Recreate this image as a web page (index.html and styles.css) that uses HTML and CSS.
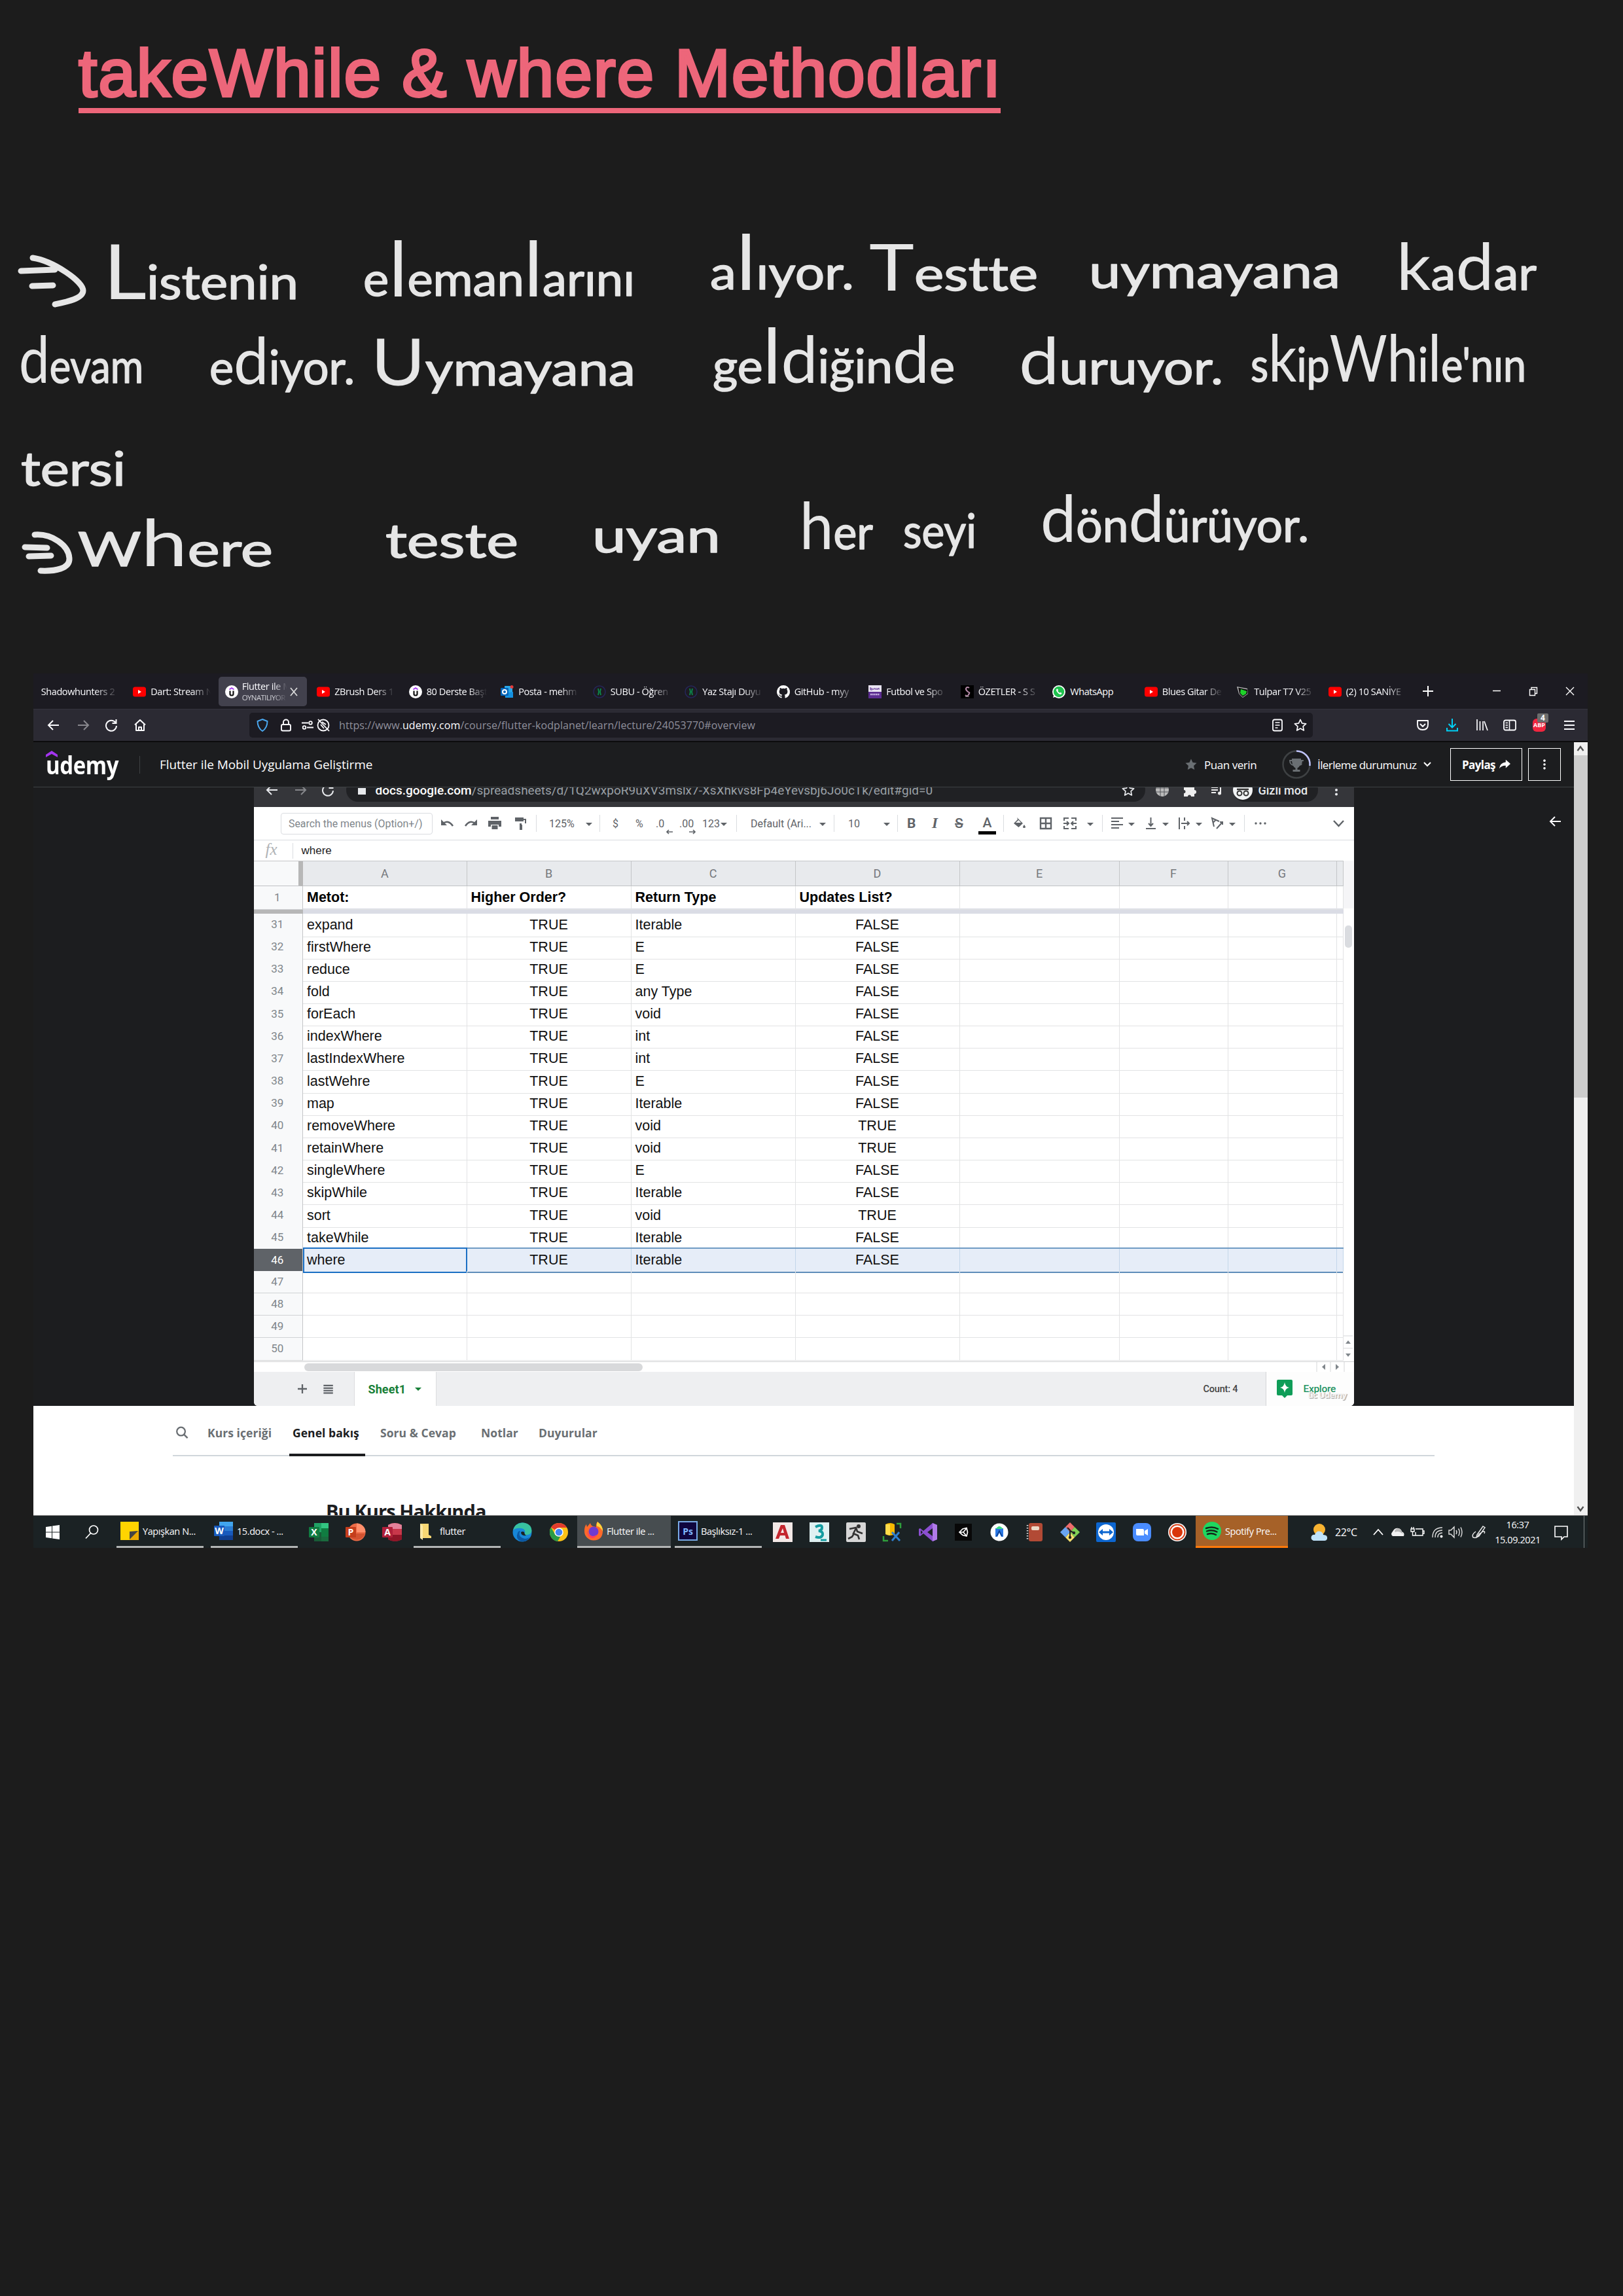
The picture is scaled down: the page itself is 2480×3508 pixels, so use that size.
FILE: index.html
```html
<!DOCTYPE html>
<html lang="tr">
<head>
<meta charset="utf-8">
<title>takeWhile &amp; where Methodları</title>
<link rel="stylesheet" href="styles.css">
</head>
<body>
<svg class="sprite" aria-hidden="true">
  <symbol id="yt" viewBox="0 0 20 20"><rect x="0" y="2.5" width="20" height="15" rx="3.5" fill="#f00"/><path d="M8 7l5 3-5 3z" fill="#fff"/></symbol>
  <symbol id="ud" viewBox="0 0 20 20"><circle cx="10" cy="10" r="10" fill="#fff"/><path d="M6.5 6.5L10 4l3.500 2.500" fill="none" stroke="#a435f0" stroke-width="1.800"/><path d="M7.500 8.500v5q0 2 2.500 2t2.500-2v-5" fill="none" stroke="#111" stroke-width="2.200"/></symbol>
  <symbol id="subu" viewBox="0 0 20 20"><circle cx="10" cy="10" r="9" fill="none" stroke="#26265a" stroke-width="1.500"/><path d="M8 5l1 5-1 5M12 5l-1 5 1 5" fill="none" stroke="#0b8a4c" stroke-width="1.800"/></symbol>
  <symbol id="car" viewBox="0 0 12 20"><path d="M1 9h10l-5 5z" fill="#5f6368"/></symbol>
  <symbol id="back" viewBox="0 0 20 20"><path d="M18 10H2M9 3l-7 7 7 7" fill="none" stroke="currentColor" stroke-width="2"/></symbol>
  <symbol id="reload" viewBox="0 0 20 20"><path d="M16.500 6A8 8 0 1 0 18 11M17.500 1v6h-6" fill="none" stroke="currentColor" stroke-width="2"/></symbol>
  <symbol id="star" viewBox="0 0 20 20"><path d="M10 1.500l2.600 5.600 6 .7-4.500 4.100 1.200 6.100L10 15l-5.300 3 1.200-6.100L1.400 7.800l6-.7z" fill="none" stroke="currentColor" stroke-width="1.700" stroke-linejoin="round"/></symbol>
  <symbol id="dots" viewBox="0 0 20 20"><g fill="currentColor"><circle cx="10" cy="3.500" r="2"/><circle cx="10" cy="10" r="2"/><circle cx="10" cy="16.500" r="2"/></g></symbol>
</svg>
<main class="page">
  <h1 class="title">takeWhile &amp; where Methodları</h1>

  <svg class="ink" viewBox="0 0 2480 560" role="img" aria-label="Notlar">
    <g class="arrow">
      <path d="M32 84L84 82M49 107l32-1M50 64c32 5 77 36 77 50 0 12-24 17-43 21"/>
      <path d="M38 506l34 1M44 520l34-1M53 487c26-2 52 16 53 36 1 16-22 20-44 19"/>
    </g>
    <g class="words">
      <text x="158" y="127" textLength="298" lengthAdjust="spacingAndGlyphs"><tspan class="tall">L</tspan>istenin</text>
      <text x="555" y="122" textLength="415" lengthAdjust="spacingAndGlyphs">e<tspan class="tall">l</tspan>eman<tspan class="tall">l</tspan>arını</text>
      <text x="1085" y="112" textLength="220" lengthAdjust="spacingAndGlyphs">a<tspan class="tall">l</tspan>ıyor.</text>
      <text x="1328" y="114" textLength="258" lengthAdjust="spacingAndGlyphs"><tspan class="big">T</tspan>estte</text>
      <text x="1664" y="110" textLength="384" lengthAdjust="spacingAndGlyphs">uymayana</text>
      <text x="2134" y="113" textLength="214" lengthAdjust="spacingAndGlyphs"><tspan class="big">k</tspan>a<tspan class="big">d</tspan>ar</text>
      <text x="29" y="255" textLength="190" lengthAdjust="spacingAndGlyphs"><tspan class="big">d</tspan>evam</text>
      <text x="320" y="257" textLength="222" lengthAdjust="spacingAndGlyphs">e<tspan class="big">d</tspan>iyor.</text>
      <text x="567" y="259" textLength="404" lengthAdjust="spacingAndGlyphs"><tspan class="big">U</tspan>ymayana</text>
      <text x="1089" y="255" textLength="370" lengthAdjust="spacingAndGlyphs">ge<tspan class="tall">l</tspan><tspan class="big">d</tspan>iğin<tspan class="big">d</tspan>e</text>
      <text x="1557" y="257" textLength="312" lengthAdjust="spacingAndGlyphs"><tspan class="big">d</tspan>uruyor.</text>
      <text x="1911" y="253" textLength="421" lengthAdjust="spacingAndGlyphs">s<tspan class="big">k</tspan>ip<tspan class="big">Wh</tspan>i<tspan class="big">l</tspan>e'nın</text>
      <text x="32" y="412" textLength="160" lengthAdjust="spacingAndGlyphs">tersi</text>
      <text x="119" y="535" textLength="298" lengthAdjust="spacingAndGlyphs">W<tspan class="big">h</tspan>ere</text>
      <text x="589" y="522" textLength="203" lengthAdjust="spacingAndGlyphs">teste</text>
      <text x="905" y="514" textLength="196" lengthAdjust="spacingAndGlyphs">uyan</text>
      <text x="1222" y="509" textLength="112" lengthAdjust="spacingAndGlyphs"><tspan class="big">h</tspan>er</text>
      <text x="1380" y="507" textLength="112" lengthAdjust="spacingAndGlyphs">seyi</text>
      <text x="1590" y="498" textLength="410" lengthAdjust="spacingAndGlyphs"><tspan class="big">d</tspan>ön<tspan class="big">d</tspan>ürüyor.</text>
    </g>
  </svg>

  <section class="screen">
    <div class="tabs">
      <div class="tab"><span>Shadowhunters 2</span></div>
      <div class="tab"><svg><use href="#yt"/></svg><span>Dart: Stream N</span></div>
      <div class="tab active"><svg><use href="#ud"/></svg><span class="two">Flutter ile M<small>OYNATILIYOR</small></span><svg class="x" viewBox="0 0 20 20"><path d="M5 4l10 12M15 4L5 16" stroke="#ddd" stroke-width="1.700"/></svg></div>
      <div class="tab"><svg><use href="#yt"/></svg><span>ZBrush Ders 1</span></div>
      <div class="tab"><svg><use href="#ud"/></svg><span>80 Derste Başt</span></div>
      <div class="tab"><svg viewBox="0 0 20 20"><path d="M6 1h12v9l1 9H7z" fill="#28a8ea"/><path d="M7 12l12-2v9H7z" fill="#1490df"/><rect y="4" width="12" height="12" rx="1" fill="#0364b8"/><circle cx="6" cy="10" r="3" fill="none" stroke="#fff" stroke-width="2"/><circle cx="17" cy="2.500" r="2.500" fill="#e33b3b"/></svg><span>Posta - mehm</span></div>
      <div class="tab"><svg><use href="#subu"/></svg><span>SUBU - Öğren</span></div>
      <div class="tab"><svg><use href="#subu"/></svg><span>Yaz Stajı Duyu</span></div>
      <div class="tab"><svg viewBox="0 0 16 16"><path fill="#fff" d="M8 0a8 8 0 0 0-2.530 15.590c.4.070.55-.17.55-.38v-1.490c-2.010.37-2.530-.49-2.690-.94-.09-.23-.48-.94-.82-1.130-.28-.15-.68-.52-.01-.53.63-.01 1.080.58 1.230.82.72 1.210 1.870.87 2.330.66.07-.52.28-.87.51-1.070-1.780-.2-3.640-.89-3.640-3.950 0-.87.31-1.590.82-2.150-.08-.2-.36-1.020.08-2.120 0 0 .67-.21 2.200.82a7.600 7.600 0 0 1 4 0c1.530-1.040 2.200-.82 2.200-.82.44 1.100.16 1.920.08 2.120.51.56.82 1.270.82 2.150 0 3.070-1.870 3.750-3.650 3.950.29.25.54.73.54 1.480v2.200c0 .21.15.46.55.38A8 8 0 0 0 8 0z"/></svg><span>GitHub - myy</span></div>
      <div class="tab"><svg viewBox="0 0 20 20"><rect width="20" height="20" fill="#5c2d91"/><rect width="20" height="10" fill="#e9e4f2"/><path d="M3 3v4h3V5H3M8 7V5h3v2M13 4v3l3-3v3" fill="none" stroke="#5c2d91"/><path d="M3 14h14" stroke="#cbb6e4" stroke-width="2.500" stroke-dasharray="2 .7"/></svg><span>Futbol ve Spo</span></div>
      <div class="tab"><svg viewBox="0 0 20 20"><rect width="20" height="20" fill="#000"/><path d="M13 4Q10 2 8.500 4t1 4.500 3.500 2.500-1 3.500-5 .5" fill="none" stroke="#b58aa8" stroke-width="2"/><path d="M7 17.500h6" stroke="#777"/></svg><span>ÖZETLER - S S</span></div>
      <div class="tab"><svg viewBox="0 0 20 20"><circle cx="10" cy="10" r="10" fill="#fff"/><path d="M1 19l1.500-5 4 3z" fill="#fff"/><circle cx="10" cy="10" r="8.200" fill="#1fc24e"/><path d="M7 5.500Q5 7 7 10t5 4q2 .5 2.500-2l-2-1.200-1.200 1Q9 10.500 8.200 8.500l1-1L8 5.500z" fill="#fff"/></svg><span class="full">WhatsApp</span></div>
      <div class="tab"><svg><use href="#yt"/></svg><span>Blues Gitar De</span></div>
      <div class="tab"><svg viewBox="0 0 20 20"><path d="M1 2l16 3 1 8-8 6-6-6z" fill="#bbb"/><path d="M3 3.500l14 3 .5 6L10 18l-5-5z" fill="#111"/><path d="M7 6l9 3-1 4-5 3-4-4z" fill="#1fd22a"/></svg><span>Tulpar T7 V25</span></div>
      <div class="tab"><svg><use href="#yt"/></svg><span>(2) 10 SANİYE</span></div>
      <div class="win">
        <svg viewBox="0 0 20 20"><path d="M10 2v16M2 10h16" stroke="#fff" stroke-width="2"/></svg>
        <svg viewBox="0 0 20 20"><path d="M4 9.500h12" stroke="#fff" stroke-width="1.500"/></svg>
        <svg viewBox="0 0 20 20"><path d="M4.500 7.500h8v9h-8zM7 7V4.500h8.500v9H13" fill="none" stroke="#fff" stroke-width="1.400"/></svg>
        <svg viewBox="0 0 20 20"><path d="M4 4l12 12M16 4L4 16" stroke="#fff" stroke-width="1.400"/></svg>
      </div>
    </div>

    <div class="nav">
      <svg><use href="#back"/></svg>
      <svg class="dim flip"><use href="#back"/></svg>
      <svg><use href="#reload"/></svg>
      <svg viewBox="0 0 20 20"><path d="M2 9.500L10 2l8 7.500M4 8.500V18h12V8.500M8 18v-5h4v5" fill="none" stroke="currentColor" stroke-width="2" stroke-linejoin="round"/></svg>
      <div class="url">
        <svg viewBox="0 0 20 20"><path d="M10 1l7.500 3q0 10-7.500 15Q2.500 14 2.500 4z" fill="none" stroke="#4aa8f0" stroke-width="1.900"/></svg>
        <svg viewBox="0 0 20 20"><rect x="3" y="9" width="14" height="9.500" rx="2" fill="none" stroke="currentColor" stroke-width="1.900"/><path d="M6 9V5.500a4 4 0 0 1 8 0V9" fill="none" stroke="currentColor" stroke-width="1.900"/></svg>
        <svg viewBox="0 0 20 20"><g fill="none" stroke="currentColor" stroke-width="1.800"><path d="M1 6.500h10M9 13.500h10"/><circle cx="14.500" cy="6.500" r="2.300"/><circle cx="5" cy="13.500" r="2.300"/></g></svg>
        <svg viewBox="0 0 20 20"><g fill="none" stroke="currentColor" stroke-width="1.800"><circle cx="10" cy="10" r="8.500"/><path d="M2 1l17 18M8 5l6 4M6 9l5 6"/></g></svg>
        <p>https://www.<b>udemy.com</b>/course/flutter-kodplanet/learn/lecture/24053770#overview</p>
        <svg viewBox="0 0 20 20"><rect x="3" y="1.500" width="14" height="17" rx="2.500" fill="none" stroke="currentColor" stroke-width="1.800"/><path d="M6.500 6h7M6.500 10h7M6.500 14h4" stroke="currentColor" stroke-width="1.700"/></svg>
        <svg><use href="#star"/></svg>
      </div>
      <svg viewBox="0 0 20 20"><path d="M2 3h16v6q0 8-8 8T2 9zM6 8l4 4 4-4" fill="none" stroke="currentColor" stroke-width="1.900" stroke-linejoin="round"/></svg>
      <svg viewBox="0 0 20 20"><path d="M10 0v13M4.500 8l5.500 5.500L15.500 8M2 14v4.500h16V14" fill="none" stroke="#00d0f5" stroke-width="2"/></svg>
      <svg viewBox="0 0 20 20"><path d="M2 1v17M6.500 4v14M11 4v14M13 4l5 14" stroke="currentColor" stroke-width="1.700"/></svg>
      <svg viewBox="0 0 20 20"><rect x="1" y="2.500" width="18" height="15" rx="2.500" fill="none" stroke="currentColor" stroke-width="1.800"/><path d="M9.500 3v14M3.500 6.500H7M3.500 10H7M3.500 13.500H7" stroke="currentColor" stroke-width="1.600"/></svg>
      <div class="abp">ABP<i>4</i></div>
      <svg viewBox="0 0 20 20"><path d="M2 4h16M2 10h16M2 16h16" stroke="currentColor" stroke-width="2"/></svg>
    </div>

    <div class="site">
      <div class="col">
        <header class="course">
          <div class="logo"><svg viewBox="0 0 18 10"><path d="M0 6l9-6 9 6v4L9 5 0 10z" fill="#a435f0"/></svg><b>udemy</b></div>
          <p class="name">Flutter ile Mobil Uygulama Geliştirme</p>
          <svg class="rate-star" viewBox="0 0 20 20"><path d="M10 .5l2.800 6.200 6.700.8-5 4.600 1.300 6.900L10 15.700 4.200 19l1.300-6.900-5-4.600 6.700-.8z" fill="#6a6f73"/></svg>
          <p class="rate">Puan verin</p>
          <svg class="cup" viewBox="0 0 44 44"><circle cx="22" cy="22" r="20.500" fill="none" stroke="#3e4143" stroke-width="2.500"/><path d="M22 1.500A20.500 20.500 0 0 1 42.500 24" fill="none" stroke="#c0c4fc" stroke-width="2.500"/><path d="M15 13h14v2h4q0 8-6 9-1.500 3-3.500 3.500V30h4v3H16.500v-3h4v-2.500Q18.500 27 17 24q-6-1-6-9h4zM13 17q.5 4 3 5l-1-5zm18 0l-1 5q2.500-1 3-5z" fill="#6a6f73"/></svg>
          <p class="prog">İlerleme durumunuz</p>
          <svg class="chev" viewBox="0 0 14 10"><path d="M2 2l5 5 5-5" fill="none" stroke="#fff" stroke-width="2"/></svg>
          <button class="share">Paylaş<svg viewBox="0 0 20 20"><path d="M12 2l8 7-8 7v-4q-7-.5-11 5 1-10 11-11z" fill="#fff"/></svg></button>
          <button class="more"><svg><use href="#dots"/></svg></button>
        </header>

        <div class="player">
          <div class="video">
            <div class="chrome">
              <div class="chrome-row">
                <svg><use href="#back"/></svg>
                <svg class="flip dim"><use href="#back"/></svg>
                <svg><use href="#reload"/></svg>
                <div class="pill">
                  <svg viewBox="0 0 20 20"><path d="M4 7h12v10H4z" fill="#e8eaed"/></svg>
                  <p><b>docs.google.com</b>/spreadsheets/d/1Q2wxpoR9uXV3mslx7-XsXhkvs8Fp4eYevsbj6Jo0cTk/edit#gid=0</p>
                  <svg><use href="#star"/></svg>
                </div>
                <svg viewBox="0 0 20 20"><circle cx="10" cy="10" r="10" fill="#bbb"/><path d="M0 7h20M0 13h20M7 0v20M13 0v20" stroke="#55565a"/></svg>
                <svg viewBox="0 0 20 20"><path d="M1 5h5a3 3 0 0 1 6 0h5v5a3 3 0 0 1 0 6v4h-5a2.500 2.500 0 0 0-5 0H1v-5a2.500 2.500 0 0 0 0-5z" fill="#eee"/></svg>
                <svg viewBox="0 0 20 20"><path d="M1 6h10M1 10h10M1 14h7" stroke="#eee" stroke-width="2"/><path d="M15 16V5h4" fill="none" stroke="#eee" stroke-width="2"/><circle cx="13.500" cy="15" r="2.500" fill="#eee"/></svg>
                <div class="incog"><svg viewBox="0 0 30 30"><circle cx="15" cy="15" r="15" fill="#f1f3f4"/><path d="M6 14h18" stroke="#333" stroke-width="2.500"/><g fill="none" stroke="#333" stroke-width="2"><circle cx="10" cy="20" r="3.500"/><circle cx="20" cy="20" r="3.500"/></g></svg>Gizli mod</div>
                <svg><use href="#dots"/></svg>
              </div>
            </div>

            <div class="tools">
              <div class="find">Search the menus (Option+/)</div>
              <svg viewBox="0 0 20 20"><path d="M1 4v9h9z" fill="#5f6368"/><path d="M4 10q8-6 15 4" fill="none" stroke="#5f6368" stroke-width="2.500"/></svg>
              <svg class="flip" viewBox="0 0 20 20"><path d="M1 4v9h9z" fill="#5f6368"/><path d="M4 10q8-6 15 4" fill="none" stroke="#5f6368" stroke-width="2.500"/></svg>
              <svg viewBox="0 0 20 20"><path d="M4 0h12v4H4zM0 6h20v9h-4v-3H4v3H0zM5.500 13h9v6h-9z" fill="#5f6368"/></svg>
              <svg viewBox="0 0 20 20"><path d="M2 1h13v2h4v7h-7v2h1v8H9v-10h8V5h-2v2H2z" fill="#5f6368"/></svg>
              <i class="bar"></i><span>125%</span><svg class="car"><use href="#car"/></svg>
              <i class="bar"></i><span>$</span><span>%</span><span class="dec">.0<svg viewBox="0 0 10 6"><path d="M10 3H2M4 0L1 3l3 3" fill="none" stroke="#5f6368" stroke-width="1.700"/></svg></span><span class="dec">.00<svg class="flip" viewBox="0 0 10 6"><path d="M10 3H2M4 0L1 3l3 3" fill="none" stroke="#5f6368" stroke-width="1.700"/></svg></span><span class="num">123<svg class="car"><use href="#car"/></svg></span>
              <i class="bar"></i><span>Default (Ari...</span><svg class="car"><use href="#car"/></svg>
              <i class="bar"></i><span>10</span><svg class="car"><use href="#car"/></svg>
              <i class="bar"></i><b>B</b><em>I</em><s>S</s><span class="tint">A</span>
              <i class="bar"></i>
              <svg viewBox="0 0 20 20"><path d="M6 1l9 9-6.500 6L1 10l6-6zM17 12q4 5 0 5t0-5z" fill="#5f6368"/><path d="M4 9l4.500-4L12 9z" fill="#fff"/></svg>
              <svg viewBox="0 0 20 20"><path d="M2 2h16v16H2zM10 2v16M2 10h16" fill="none" stroke="#5f6368" stroke-width="2.400"/></svg>
              <svg viewBox="0 0 20 20"><path d="M1 6V2h7M12 2h7v4M1 14v4h7M12 18h7v-4M0 10h7M20 10h-7M5 7l3 3-3 3M15 7l-3 3 3 3" fill="none" stroke="#5f6368" stroke-width="2"/></svg>
              <svg class="car"><use href="#car"/></svg>
              <i class="bar"></i>
              <svg viewBox="0 0 20 20"><path d="M0 2h18M0 7h12M0 12h18M0 17h12" stroke="#5f6368" stroke-width="2"/></svg><svg class="car"><use href="#car"/></svg>
              <svg viewBox="0 0 20 20"><path d="M2 18h15M9.500 1v12M6 10l3.500 4 3.500-4" fill="none" stroke="#5f6368" stroke-width="2"/></svg><svg class="car"><use href="#car"/></svg>
              <svg viewBox="0 0 20 20"><path d="M2 1v18M10 1v5M10 14v5M5 10h12M14 7l3 3-3 3" fill="none" stroke="#5f6368" stroke-width="2"/></svg><svg class="car"><use href="#car"/></svg>
              <svg viewBox="0 0 20 20"><path d="M5 15L2 2l11 5M3.500 9L8 4.500M9 18L18 8M14 8h4v4" fill="none" stroke="#5f6368" stroke-width="2"/></svg><svg class="car"><use href="#car"/></svg>
              <i class="bar"></i>
              <svg viewBox="0 0 20 20"><g fill="#5f6368"><circle cx="3" cy="10" r="1.700"/><circle cx="10" cy="10" r="1.700"/><circle cx="17" cy="10" r="1.700"/></g></svg>
              <svg viewBox="0 0 20 20"><path d="M2 6l7.500 8L17 6" fill="none" stroke="#5f6368" stroke-width="2.500"/></svg>
            </div>

            <div class="formula"><em>fx</em><span>where</span></div>

            <div class="sheet">
              <div class="grid">
                <div class="row head"><i></i><i>A</i><i>B</i><i>C</i><i>D</i><i>E</i><i>F</i><i>G</i><i></i></div>
                <div class="row first"><i>1</i><b>Metot:</b><b>Higher Order?</b><b>Return Type</b><b>Updates List?</b><b></b><b></b><b></b><b></b></div>
                <div class="freeze"></div>
                <div class="row"><i>31</i><b>expand</b><b>TRUE</b><b>Iterable</b><b>FALSE</b><b></b><b></b><b></b><b></b></div>
                <div class="row"><i>32</i><b>firstWhere</b><b>TRUE</b><b>E</b><b>FALSE</b><b></b><b></b><b></b><b></b></div>
                <div class="row"><i>33</i><b>reduce</b><b>TRUE</b><b>E</b><b>FALSE</b><b></b><b></b><b></b><b></b></div>
                <div class="row"><i>34</i><b>fold</b><b>TRUE</b><b>any Type</b><b>FALSE</b><b></b><b></b><b></b><b></b></div>
                <div class="row"><i>35</i><b>forEach</b><b>TRUE</b><b>void</b><b>FALSE</b><b></b><b></b><b></b><b></b></div>
                <div class="row"><i>36</i><b>indexWhere</b><b>TRUE</b><b>int</b><b>FALSE</b><b></b><b></b><b></b><b></b></div>
                <div class="row"><i>37</i><b>lastIndexWhere</b><b>TRUE</b><b>int</b><b>FALSE</b><b></b><b></b><b></b><b></b></div>
                <div class="row"><i>38</i><b>lastWehre</b><b>TRUE</b><b>E</b><b>FALSE</b><b></b><b></b><b></b><b></b></div>
                <div class="row"><i>39</i><b>map</b><b>TRUE</b><b>Iterable</b><b>FALSE</b><b></b><b></b><b></b><b></b></div>
                <div class="row"><i>40</i><b>removeWhere</b><b>TRUE</b><b>void</b><b>TRUE</b><b></b><b></b><b></b><b></b></div>
                <div class="row"><i>41</i><b>retainWhere</b><b>TRUE</b><b>void</b><b>TRUE</b><b></b><b></b><b></b><b></b></div>
                <div class="row"><i>42</i><b>singleWhere</b><b>TRUE</b><b>E</b><b>FALSE</b><b></b><b></b><b></b><b></b></div>
                <div class="row"><i>43</i><b>skipWhile</b><b>TRUE</b><b>Iterable</b><b>FALSE</b><b></b><b></b><b></b><b></b></div>
                <div class="row"><i>44</i><b>sort</b><b>TRUE</b><b>void</b><b>TRUE</b><b></b><b></b><b></b><b></b></div>
                <div class="row"><i>45</i><b>takeWhile</b><b>TRUE</b><b>Iterable</b><b>FALSE</b><b></b><b></b><b></b><b></b></div>
                <div class="row sel"><i>46</i><b>where</b><b>TRUE</b><b>Iterable</b><b>FALSE</b><b></b><b></b><b></b><b></b></div>
                <div class="row"><i>47</i><b></b><b></b><b></b><b></b><b></b><b></b><b></b><b></b></div>
                <div class="row"><i>48</i><b></b><b></b><b></b><b></b><b></b><b></b><b></b><b></b></div>
                <div class="row"><i>49</i><b></b><b></b><b></b><b></b><b></b><b></b><b></b><b></b></div>
                <div class="row"><i>50</i><b></b><b></b><b></b><b></b><b></b><b></b><b></b><b></b></div>
              </div>
              <div class="vscroll"><i class="gap"></i><i class="thumb"></i><svg viewBox="0 0 14 40"><path d="M0 1h14M0 20h14" stroke="#d5d6d8"/><path d="M3 13h8l-4-5zM3 28h8l-4 5z" fill="#80868b"/></svg></div>
            </div>
            <div class="hscroll"><i></i><svg viewBox="0 0 44 15"><path d="M1 0v15M22 0v15M43 0v15" stroke="#d5d6d8"/><path d="M14 3v9l-5-4.500zM30 3v9l5-4.500z" fill="#80868b"/></svg></div>
            <footer class="sheetbar">
              <svg viewBox="0 0 20 20"><path d="M10 3v14M3 10h14" stroke="#5f6368" stroke-width="2.300"/></svg>
              <svg viewBox="0 0 20 20"><path d="M1 3.500h17M1 8h17M1 12.500h17M1 17h17" stroke="#5f6368" stroke-width="2.600"/></svg>
              <div class="sheet1">Sheet1<svg viewBox="0 0 12 20"><path d="M1 8h10l-5 5z" fill="#188038"/></svg></div>
              <div class="count">Count: 4</div>
              <div class="explore"><svg viewBox="0 0 24 28"><path d="M2 0h20q2 0 2 2v20q0 2-2 2h-6l-4 4-4-4H2q-2 0-2-2V2q0-2 2-2z" fill="#0f9d58"/><path d="M12 4q1 7 7 8-6 1-7 8-1-7-7-8 6-1 7-8z" fill="#fff"/></svg>Explore<span class="mark">ûc Udemy</span></div>
            </footer>
          </div>
          <svg class="collapse"><use href="#back"/></svg>
        </div>

        <nav class="links">
          <svg viewBox="0 0 20 20"><circle cx="8.500" cy="8.500" r="6.700" fill="none" stroke="#6a6f73" stroke-width="2.400"/><path d="M13.500 13.500l5.500 5.500" stroke="#6a6f73" stroke-width="2.600"/></svg>
          <a class="l1">Kurs içeriği</a><a class="l2 on">Genel bakış</a><a class="l3">Soru &amp; Cevap</a><a class="l4">Notlar</a><a class="l5">Duyurular</a>
        </nav>
        <h2 class="about">Bu Kurs Hakkında</h2>
      </div>
      <div class="scroll"><svg viewBox="0 0 20 20"><path d="M5.500 13L10 7l4.500 6" fill="none" stroke="#505050" stroke-width="2.300"/></svg><i></i><svg viewBox="0 0 20 20"><path d="M5.500 7l4.500 6 4.500-6" fill="none" stroke="#505050" stroke-width="2.300"/></svg></div>
    </div>

    <div class="taskbar">
      <svg viewBox="0 0 30 30"><path d="M0 7l9-1.300V14.500H0zM10 5.500L21 4v10.500H10zM0 15.500h9v8.800L0 23zM10 15.500h11V26l-11-1.500z" fill="#fff"/></svg>
      <svg viewBox="0 0 30 30"><circle cx="13" cy="11.500" r="6.500" fill="none" stroke="#fff" stroke-width="1.700"/><path d="M8.500 16.500L1 24.500" stroke="#fff" stroke-width="1.700"/></svg>
      <div class="task"><svg viewBox="0 0 30 30"><path d="M1 1h28v15L17 29H1z" fill="#ffd400"/><path d="M15 29V17l14-2v14z" fill="#e9a800"/><path d="M15 28V16l13-1z" fill="#444"/></svg>Yapışkan N...</div>
      <div class="task"><svg viewBox="0 0 30 30"><path d="M8 1h21v7H8z" fill="#41a5ee"/><path d="M8 8h21v7H8z" fill="#2b7cd3"/><path d="M8 15h21v7H8z" fill="#185abd"/><path d="M8 22h21v7H8z" fill="#103f91"/><rect y="7" width="16" height="16" rx="1" fill="#185abd"/><text x="8" y="20" text-anchor="middle" class="gl">W</text></svg>15.docx - ...</div>
      <svg viewBox="0 0 30 30"><path d="M8 1h11v14H8z" fill="#21a366"/><path d="M19 1h11v8H19z" fill="#33c481"/><path d="M19 9h11v13H19z" fill="#107c41"/><path d="M8 15h11v14H8z" fill="#185c37"/><path d="M19 22h11v7H19z" fill="#1a6b3e"/><rect y="7" width="16" height="16" rx="1" fill="#107c41"/><text x="8" y="20" text-anchor="middle" class="gl">X</text></svg>
      <svg viewBox="0 0 30 30"><circle cx="17" cy="15" r="13.500" fill="#ed6c47"/><path d="M17 15V1.500A13.500 13.500 0 0 1 30.500 15z" fill="#ff8f6b"/><path d="M4 17a13.500 13.500 0 0 0 26 0z" fill="#d35230"/><rect y="7" width="16" height="16" rx="1" fill="#c43e1c"/><text x="8" y="20" text-anchor="middle" class="gl">P</text></svg>
      <svg viewBox="0 0 30 30"><path d="M9 4q10-6 21 0v22q-10 6-21 0z" fill="#c8374a"/><path d="M9 4q10-6 21 0v6H9z" fill="#e4819a"/><path d="M9 19h21v7q-10 6-21 0z" fill="#8f1527"/><rect y="7" width="16" height="16" rx="1" fill="#b0203a"/><text x="8" y="20" text-anchor="middle" class="gl">A</text></svg>
      <div class="task fl"><svg viewBox="0 0 30 30"><path d="M7 4h13v17l4 2v3H10z" fill="#f7d774"/><path d="M7 4l4 3v22l-4-3z" fill="#ffe9a6"/></svg>flutter</div>
      <svg viewBox="0 0 30 30"><circle cx="15" cy="15" r="14.500" fill="#1787d8"/><path d="M1 12Q4 1 15 .5 29 1 29.500 13q-1 7-11 6 3-9-5-10T1 12z" fill="#38c2a0"/><path d="M12 13q-5 9 7 12 5 0 8-3-6 9-14 7-9-4-5-13 1-3 4-3z" fill="#0c59a4"/><path d="M13 15q3-2 5 0 0 3 3 5-8 1-8-5z" fill="#1b2224"/></svg>
      <svg viewBox="0 0 30 30"><circle cx="15" cy="15" r="14" fill="#fbc116"/><path d="M15 15L3 7.700A14 14 0 0 1 27.200 8H15z" fill="#e33b2e"/><path d="M3 7.700L9 18l8 4-4 7A14 14 0 0 1 3 7.700z" fill="#2a9b48"/><circle cx="15" cy="15" r="6.800" fill="#fff"/><circle cx="15" cy="15" r="5.300" fill="#4285f4"/></svg>
      <div class="task cur"><svg viewBox="0 0 30 30"><path d="M15 29.500A14 14 0 0 1 1 15Q1 8 4 5l1 4 5-6q1 4 4 5l5 1q-1-4 2-8 8 6 8 14 0 14-14 14.500z" fill="#ff6a2a"/><path d="M21 1q9 7 8 15-4-8-9-8-1-4 1-7z" fill="#ffd43a"/><circle cx="15" cy="16" r="7.500" fill="#6f3bd0"/><path d="M5 15q4 12 15 6-3 6-8 5-7-2-7-11z" fill="#ff3f5d"/></svg>Flutter ile ...</div>
      <div class="task ps"><svg viewBox="0 0 30 30"><rect x="1" y="1" width="28" height="28" fill="#10063f" stroke="#78a9e6" stroke-width="2"/><text x="15" y="20.500" text-anchor="middle" class="gl">Ps</text></svg>Başlıksız-1 ...</div>
      <svg viewBox="0 0 30 30"><rect width="30" height="30" fill="#f3e9e7"/><path d="M4 25L12 4h6l7 21h-5l-1.500-5H11l-2 5zM12 16h5l-2-7z" fill="#c4262e"/></svg>
      <svg viewBox="0 0 30 30"><rect width="30" height="30" fill="#dff1f2"/><path d="M9 7q10-5 10 1 0 4-5 5 7 1 6 6-2 6-11 3" fill="none" stroke="#139ca0" stroke-width="4"/><path d="M17 27h9" stroke="#139ca0" stroke-width="3"/></svg>
      <svg viewBox="0 0 30 30"><rect width="30" height="30" rx="2" fill="#d7d7d7"/><circle cx="19" cy="6" r="3" fill="#333"/><path d="M5 10l10-2 2 6 8 3M15 9l-4 8 7 3 2 6M12 17l-3 5-6 3" fill="none" stroke="#333" stroke-width="2.600"/></svg>
      <svg viewBox="0 0 30 30"><path d="M5 3q7-4 14 0v15q-7 4-14 0z" fill="#f5b800"/><path d="M5 3h7v17l-7-2z" fill="#ffdc4a"/><path d="M22 2h6v7M2 21v7h7" fill="none" stroke="#2f9e3c" stroke-width="2.500"/><path d="M15 15l12 13M26 15L15 28" stroke="#2d7fd0" stroke-width="3"/></svg>
      <svg viewBox="0 0 30 30"><path d="M22 1l7 3v22l-7 3L8 17l-5 4-2-1V10l2-1 5 4zM22 9l-8 6 8 6zM4 12v6l3-3z" fill="#8b4fd0" fill-rule="evenodd"/><path d="M22 1l7 3v22l-7 3z" fill="#b07ae8"/></svg>
      <svg viewBox="0 0 30 30"><rect x="1" y="2" width="26" height="26" fill="#080808"/><path d="M8 15l5-5 6-1.500 1.500 6.500L19 21l-6-1.500zM8 15h6M14 15l5-6M14 15l5 6" fill="none" stroke="#fff" stroke-width="1.700"/></svg>
      <svg viewBox="0 0 30 30"><circle cx="15" cy="15" r="13.500" fill="#fff"/><path d="M9 9h12v13h-3l-3-6-3 6H9z" fill="#2b78e4"/><path d="M9.500 10q5.500-8 11 0z" fill="#3ddc84"/><path d="M11 21l4-8 4 8" fill="none" stroke="#0b3c8a" stroke-width="1.500"/></svg>
      <svg viewBox="0 0 30 30"><rect x="6" y="1" width="21" height="28" rx="3" fill="#b24a35"/><rect x="10" y="6" width="12" height="6" rx="2" fill="#ecd9c7"/><path d="M4 4v23" stroke="#ddd" stroke-width="2.500" stroke-dasharray="1.500 2.500"/></svg>
      <svg viewBox="0 0 30 30"><path d="M15 0l7 7-7 8-7-8z" fill="#ee6b6b"/><path d="M8 7l7 8-7 8-8-8z" fill="#6aa5f0"/><path d="M22 7l8 8-8 8-7-8z" fill="#7fcf55"/><path d="M15 15l7 8-7 7-7-7z" fill="#f5dc6b"/><path d="M11 8l4 4v11M15 13l6 3" fill="none" stroke="#222" stroke-width="2"/><circle cx="15" cy="23" r="2.200" fill="#222"/><circle cx="21" cy="16" r="2.200" fill="#222"/></svg>
      <svg viewBox="0 0 30 30"><rect width="30" height="30" rx="2" fill="#0c66d0"/><circle cx="15" cy="15" r="12" fill="#fff"/><path d="M4 15l6-5v3.500h10V10l6 5-6 5v-3.500H10V20z" fill="#0c66d0"/></svg>
      <svg viewBox="0 0 30 30"><rect x="1" y="1" width="28" height="28" rx="8" fill="#4a8cff"/><path d="M6 10h10q2 0 2 2v8H8q-2 0-2-2zM19 13l5-3v10l-5-3z" fill="#fff"/></svg>
      <svg viewBox="0 0 30 30"><circle cx="15" cy="15" r="14" fill="#fff"/><circle cx="15" cy="15" r="11.500" fill="none" stroke="#d8431b" stroke-width="2"/><circle cx="15" cy="15" r="8" fill="#d9360b"/></svg>
      <div class="task spot"><svg viewBox="0 0 30 30"><circle cx="15" cy="15" r="14" fill="#1ed760"/><path d="M6 11q10-3.500 18 1M7 15.500q8-3 15.500 1M8 20q7-2.500 13 1" fill="none" stroke="#12291a" stroke-width="2.400" stroke-linecap="round"/></svg>Spotify Pre...</div>
      <svg viewBox="0 0 30 30"><circle cx="14" cy="11" r="9" fill="#f9b331"/><path d="M5 28q-5-2-3-7 2-3 5-2 3-7 9-5 3 1 4 5 7 0 6 6-1 3-4 3z" fill="#bfe2fb"/></svg>
      <span>22°C</span>
      <svg viewBox="0 0 30 30"><path d="M1 19l7-8 7 8" fill="none" stroke="#fff" stroke-width="1.800"/></svg>
      <svg viewBox="0 0 30 30"><path d="M3 21q-4-3 0-7 3-6 9-5 4 1 5 5 5 2 3 7z" fill="#f2f2f2"/><path d="M7 15q5-3 12 3l-2-4q-1-4-5-5-4 0-6 4z" fill="#b9b9b9"/></svg>
      <svg viewBox="0 0 30 30"><path d="M8 10h11v10H8v-5M19 13h2v4h-2M2 7v3M5 7v3M1 10h5v4H1zM3.500 14v6H8" fill="none" stroke="#fff" stroke-width="1.400"/></svg>
      <svg viewBox="0 0 30 30"><path d="M2 23Q2 8 17 8M6 23Q6 12 17 12M10 23q0-7 7-7" fill="none" stroke="#ddd" stroke-width="1.400"/><circle cx="15.500" cy="21.500" r="2" fill="#fff"/></svg>
      <svg viewBox="0 0 30 30"><path d="M1 12h3l5-5v16l-5-5H1zM12 12q2 3 0 6M15.500 9.500q3.500 5.500 0 11M19 7.500q4 7.500 0 15" fill="none" stroke="#e0e0e0" stroke-width="1.400"/></svg>
      <svg viewBox="0 0 30 30"><path d="M9 19L18 6l3 2-9 13-4 2zM7 14q-7 5-4 9 6 2 9-5l6-4q4-1 2 3" fill="none" stroke="#e8e8e8" stroke-width="1.500"/></svg>
      <div class="clock">16:37<br>15.09.2021</div>
      <svg viewBox="0 0 30 30"><path d="M1 6h19v16h-5l-4 4v-4H1z" fill="none" stroke="#fff" stroke-width="1.600"/></svg>
      <i class="peek"></i>
    </div>
  </section>
</main>
</body>
</html>
```
FILE: styles.css
```css
* { box-sizing: border-box; }
body { margin: 0; background: #1c1c1c; font-family: "Open Sans", "Noto Sans", sans-serif; }
p, h1, h2 { margin: 0; font-weight: 400; }
svg { display: block; flex: none; width: 20px; height: 20px; overflow: visible; }
i, em { font-style: normal; }
.sprite { position: absolute; width: 0; height: 0; }
.flip { transform: scaleX(-1); }
.page { width: 2480px; height: 3508px; overflow: hidden; background: #1c1c1c; display: flow-root; }

/* heading and handwritten notes */
.title {
  width: 1409px; height: 121px; margin: 52px 0 0 120px; border-bottom: 8px solid #ed667a;
  font: 102px/121px "Liberation Sans", Arial, sans-serif; letter-spacing: 1.8px; white-space: nowrap;
  color: #ed667a; -webkit-text-stroke: 3.8px #ed667a;
}
.ink { width: 2480px; height: 560px; margin-top: 157px; }
.arrow { fill: none; stroke: #e6e6e6; stroke-width: 9; stroke-linecap: round; stroke-linejoin: round; }
.words { font: 72px Lato, sans-serif; font-variant-ligatures: none; fill: #e6e6e6; stroke: #e6e6e6; stroke-width: 1.5; stroke-linejoin: round; }
.tall { font-size: 116px; stroke-width: 0; }
.big { font-size: 98px; stroke-width: 0; }

.screen { width: 2375px; height: 1336px; margin: 139px 0 0 51px; overflow: hidden; color: #fbfbfe; background: #1c1b22; }

/* tab strip */
.tabs { height: 54px; display: flex; padding-left: 1.700px; background: #1c1b22; }
.tab { width: 135px; height: 45px; margin: 5px 5.500px 0 0; padding-left: 10px; display: flex; align-items: center; gap: 7px; border-radius: 5px; flex: none; font-size: 14.500px; letter-spacing: -.4px; white-space: nowrap; }
.tab span { flex: 1; min-width: 0; margin-right: 4px; overflow: hidden; -webkit-mask-image: linear-gradient(90deg, #000 68%, transparent 98%); mask-image: linear-gradient(90deg, #000 68%, transparent 98%); }
.tab .full { -webkit-mask-image: none; mask-image: none; }
.active { background: #42414d; gap: 6px; }
.tab.active span { margin: 0; line-height: 17px; }
.active small { display: block; font-size: 11.500px; letter-spacing: -.6px; color: #d0d0d6; }
.active .x { margin: 0 10px 0 -7px; }
.win { display: grid; grid-template-columns: 105px 56px 56px 20px; align-items: center; margin-left: 12px; }

/* address bar */
.nav { height: 51px; padding-left: 21px; display: grid; grid-template-columns: 45px 43px 44px 177px 1625px 158px 45px 46px 42px 45px 46px 20px; align-items: center; background: #2b2a33; border-top: 1px solid #35343d; border-bottom: 2px solid #0c0c0d; }
.nav > svg:nth-of-type(5) { grid-column: 7; }
.dim { opacity: .45; }
.url { height: 38px; padding-left: 10px; border-radius: 5px; background: #1c1b22; display: grid; grid-template-columns: 36px 33px 24px 34px 1fr 35px 29px; align-items: center; }
.url p { font-size: 16px; letter-spacing: .08px; color: #8f8f9b; white-space: nowrap; }
.url b { font-weight: 400; color: #fbfbfe; }
.abp { position: relative; width: 20px; height: 20px; background: #f0263f; border-radius: 6px; font: 700 9px/20px "Open Sans", sans-serif; text-align: center; }
.abp i { position: absolute; left: 7px; top: -8px; width: 17px; height: 14px; line-height: 14px; font-size: 12px; background: #6d6d6d; border-radius: 2px; }

/* course page */
.site { height: 1181px; display: flex; background: #fff; overflow: hidden; }
.col { width: 2354px; }
.course { height: 69px; display: flex; align-items: center; padding-left: 19px; background: #1c1d1f; border-bottom: 1px solid #3e4143; color: #fff; font-size: 17px; letter-spacing: -.45px; white-space: nowrap; }
.course p { flex: none; }
.logo { width: 144px; height: 27px; flex: none; border-right: 1px solid #3e4143; position: relative; }
.logo svg { position: absolute; left: 0; top: -8px; width: 18px; height: 10px; }
.logo b { display: block; font: 700 33px/27px "Open Sans", sans-serif; letter-spacing: -.4px; transform: scaleY(1.15); }
.name { width: 1597px; padding-left: 30px; font-size: 19px; letter-spacing: -.06px; }
.rate-star { width: 18px; height: 18px; margin-right: 11px; }
.rate { width: 119px; }
.cup { width: 44px; height: 44px; margin-right: 10px; }
.prog { width: 161px; letter-spacing: -.6px; }
.chev { width: 14px; height: 10px; margin-right: 28px; }
button { height: 50px; flex: none; padding: 0; border: 1px solid #fff; background: none; color: #fff; display: flex; align-items: center; justify-content: center; }
.share { width: 110px; gap: 5px; font: 700 17px "Open Sans", sans-serif; letter-spacing: -.6px; }
.share svg { width: 18px; height: 18px; }
.more { width: 50px; margin-left: 9px; }
.more svg { height: 18px; }

.player { height: 945px; display: flex; background: #1c1d1f; }
.video { width: 1681px; margin-left: 336.500px; overflow: hidden; border-radius: 0 0 6px 6px; background: #fff; font-family: Roboto, sans-serif; color: #5f6368; }
.collapse { margin: 42px 0 0 298px; width: 20px; height: 20px; }
.chrome { height: 30px; overflow: hidden; background: #35363a; color: #e8eaed; }
.chrome-row { height: 44px; margin-top: -18px; padding-left: 18px; display: grid; grid-template-columns: 43px 42px 38px 1237px 42px 42px 34px 148px 20px; align-items: center; }
.pill { width: 1221px; height: 36px; border-radius: 18px; background: #202124; display: grid; grid-template-columns: 31px 1fr 36px; padding-left: 14px; align-items: center; }
.pill p { font-size: 19px; letter-spacing: 0; color: #9aa0a6; white-space: nowrap; }
.pill b { font-weight: 500; color: #fff; }
.incog { height: 36px; width: 130px; border-radius: 18px; background: #202124; display: flex; align-items: center; gap: 9px; font-size: 18px; font-weight: 500; white-space: nowrap; }
.incog svg { width: 30px; height: 30px; }

.tools { height: 51px; padding-left: 41.500px; border-bottom: 1px solid #dadce0; display: grid; align-items: center; white-space: nowrap; font-size: 16px;
  grid-template-columns: 244px 37px 36px 39px 34px 20px 55px 22px 20px 35px 31px 36px 35px 52px 22px 104px 23px 22px 53px 22px 15px 38px 35px 36px 38px 15px 40px 37px 35px 24px 14px 25px 26px 26px 25px 26px 24px 27px 24px 15px 120px 20px; }
.find { width: 232px; height: 33px; padding-left: 11px; line-height: 31px; border: 1px solid #dadce0; border-radius: 4px; color: #80868b; font-size: 15.900px; }
.bar { width: 1px; height: 26px; background: #dadce0; }
.car { width: 12px; height: 20px; }
.dec { position: relative; }
.dec svg { position: absolute; right: 10px; bottom: -6px; width: 10px; height: 6px; }
.num { display: flex; align-items: center; }
.tools b, .tools em, .tools s { font-size: 21px; font-weight: 700; }
.tools em { font-style: italic; font-family: "Liberation Serif", serif; font-size: 23px; }
.tools s, .tint { font-weight: 500; }
.tint { width: 27px; margin-top: 2px; text-align: center; font-size: 21px; line-height: 26px; border-bottom: 5px solid #000; }
.formula { height: 31px; display: flex; align-items: center; }
.formula em { width: 60px; height: 24px; padding-left: 18px; border-right: 1px solid #dadce0; font: italic 25px/20px "Liberation Serif", serif; color: #b0b3b6; }
.formula span { padding-left: 13px; font: 17px "Liberation Sans", sans-serif; color: #222; }

/* spreadsheet grid */
.sheet { height: 766px; display: flex; border-bottom: 1px solid #cfd0d2; }
.grid { width: 1665.500px; }
.row { height: 34.160px; display: grid; grid-template-columns: 75.500px 250.500px 251px 251px 251px 244px 166px 166px 10.500px; }
.row i { display: grid; place-items: center; padding-bottom: 2px; padding-right: 2px; font-size: 17px; color: #80868b; background: #f8f9fa; border-right: 1px solid #c4c6c8; border-bottom: 1px solid #d0d2d4; }
.row b { padding-left: 6px; font: 21.500px/35px "Liberation Sans", Arial, sans-serif; color: #111; border-right: 1px solid #e2e3e4; border-bottom: 1px solid #e2e3e4; white-space: nowrap; }
.row b:nth-child(3), .row b:nth-child(5) { padding: 0; text-align: center; }
.row.head { height: 39px; border-top: 1px solid #c4c6c8; }
.head i { background: #e8eaed; font-size: 18px; color: #76797d; border-bottom-color: #c0c2c4; padding: 0; }
.head i:first-child { background: #f8f9fa; border-right: 7px solid #b7b7b7; }
.row.first { height: 34px; }
.first b:nth-child(n) { font-weight: 700; color: #000; padding-left: 6px; text-align: left; }
.freeze { width: 1680px; height: 7.500px; background: linear-gradient(90deg, #b7b7b7 75.500px, #dadce5 75.500px); }
.row.sel b { background: #e6edf8; border-bottom: 2px solid #5f8dba; border-right-color: #c3d6ea; box-shadow: 0 -2px #6f9bc4; }
.row.sel i { background: #5f6368; color: #fff; }
.row.sel b:nth-child(2) { padding-left: 6px; border: solid #1a6fc4; border-width: 0 2px 2px 0; box-shadow: 0 -2px #1a6fc4, inset 2px 0 #1a6fc4; }
.vscroll { width: 15px; display: flex; flex-direction: column; background: #fff; }
.vscroll .gap { height: 73px; background: #f5f5f7; }
.vscroll .thumb { width: 11px; height: 34px; margin: 26px 0 0 2px; border-radius: 5px; background: #dadce0; }
.vscroll svg { width: 14px; height: 40px; margin-top: auto; }
.hscroll { height: 15px; padding-left: 77px; display: flex; justify-content: space-between; align-items: center; background: #fff; }
.hscroll i { width: 517px; height: 12px; border-radius: 6px; background: #d8d9db; }
.hscroll svg { width: 44px; height: 15px; margin-right: 14px; }
.sheetbar { height: 52px; padding-left: 64px; display: grid; grid-template-columns: 41px 48px 1298px 95px 1fr; align-items: center; background: #eeeff1; font-size: 15px; }
.sheetbar > svg:nth-child(2) { width: 18px; height: 17px; }
.sheet1 { width: 126px; height: 52px; padding-left: 21px; display: flex; align-items: center; gap: 13px; background: #fff; border: solid #dcdddf; border-width: 0 1px; font-size: 18px; font-weight: 700; letter-spacing: .1px; color: #188038; }
.sheet1 svg { width: 12px; }
.count { font-weight: 500; font-size: 14.500px; letter-spacing: -.2px; color: #444; white-space: nowrap; }
.explore { position: relative; height: 52px; padding-left: 16px; display: flex; align-items: center; gap: 17px; background: #fdfdfd; border-left: 1px solid #d5d6d8; font-size: 15.500px; font-weight: 500; color: #2a9565; letter-spacing: -.3px; }
.explore svg { width: 24px; height: 28px; }
.mark { position: absolute; left: 64px; top: 26px; font: 700 13px "Open Sans", sans-serif; letter-spacing: -.7px; color: #f4f4f4; text-shadow: 1px 1px 1px #999; white-space: nowrap; }

.links { width: 1928px; height: 77px; margin-left: 213px; padding-left: 4px; display: flex; border-bottom: 2px solid #d1d7dc; font: 700 17.500px/85px "Open Sans", sans-serif; letter-spacing: .05px; color: #6a6f73; white-space: nowrap; }
.links svg { margin: 31px 23px 0 0; height: 19px; width: 20px; }
.links a { height: 77px; padding: 0 6px; line-height: 83px; }
.l1 { width: 131px; } .l2 { width: 116px; margin-right: 17px; } .l3 { width: 154px; } .l4 { width: 88px; } .l5 { width: 100px; }
.links .on { padding-left: 5px; color: #1c1d1f; border-bottom: 4px solid #1c1d1f; }
.about { margin: 62px 0 0 447px; font: 700 29px/44px "Open Sans", sans-serif; letter-spacing: -.9px; color: #1c1d1f; white-space: nowrap; }
.scroll { width: 21px; display: flex; flex-direction: column; background: #f0f0f0; }
.scroll i { height: 523px; margin-bottom: auto; background: #cdcdcd; }

/* taskbar */
.taskbar { height: 50px; padding-left: 19px; border-top: 1px solid #777; display: grid; align-items: center; background: #1b2224; font-size: 14.500px; letter-spacing: -.42px; white-space: nowrap;
  grid-template-columns: 60px 48px 144px 150px 56px 56px 48px 151px 56px 43px 149px 150px 56px 56px 55px 55px 55px 54px 54px 54px 55px 55px 54px 43px 175px 38px 58px 27px 30px 32px 26px 35px 32px 95px 45px 6px; }
.taskbar svg { width: 30px; height: 30px; }
.task { width: 133px; height: 49px; padding-left: 5px; display: flex; align-items: center; gap: 5px; border-bottom: 3px solid #b3b5b5; }
.fl { padding-left: 3px; gap: 7px; }
.cur { width: 143px; padding-left: 10px; background: #474d50; }
.spot { width: 141px; padding-left: 10px; background: #a66128; border-color: #ff7a0a; }
.taskbar span { font-size: 16px; }
.gl { font: 700 14px "Open Sans", sans-serif; letter-spacing: 0; fill: #fff; }
.ps .gl { fill: #7fb8ff; }
.clock { width: 78px; text-align: center; line-height: 23px; }
.peek { width: 1px; height: 49px; background: #7a7f80; }
```
